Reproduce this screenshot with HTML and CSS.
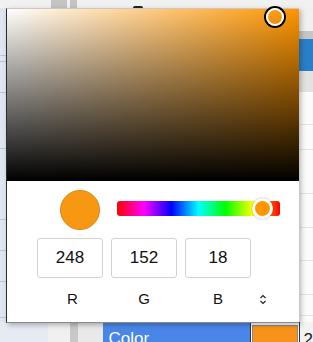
FILE: index.html
```html
<!DOCTYPE html>
<html>
<head>
  <meta charset="utf-8">
  <title>Color picker</title>
  <meta name="viewport" content="width=device-width, initial-scale=1">
  <link rel="stylesheet" href="styles.css">
</head>
<body>
  <div class="app">
    <div class="topbar">
      <span class="tb-block tb-a"></span>
      <span class="tb-block tb-b"></span>
      <span class="tb-knob"></span>
    </div>

    <div class="middle">
      <div class="left-strip">
        <div class="ls-row" style="height:47px"></div>
        <div class="ls-row" style="height:5px"></div>
        <div class="ls-row" style="height:30px"></div>
        <div class="ls-row" style="height:55px"></div>
        <div class="ls-row" style="height:70px"></div>
        <div class="ls-row" style="height:30px"></div>
        <div class="ls-row" style="height:30px"></div>
        <div class="ls-row" style="height:35px"></div>
      </div>
      <div class="center"></div>
      <div class="right-strip">
        <div class="rs-top"></div>
        <div class="rs-gray"></div>
        <div class="rs-blue"></div>
        <div class="rs-light"></div>
        <div class="rs-line" style="height:32px"></div>
        <div class="rs-line" style="height:24px"></div>
        <div class="rs-line" style="height:43px"></div>
        <div class="rs-line" style="height:33px"></div>
        <div class="rs-line" style="height:32px"></div>
        <div class="rs-line" style="height:33px"></div>
        <div class="rs-line" style="height:20px"></div>
      </div>
    </div>

    <div class="bottombar">
      <div class="bb-side"></div>
      <div class="bb-light"></div>
      <div class="bb-gray"></div>
      <div class="bb-cell"></div>
      <div class="bb-color">Color</div>
      <div class="bb-swatch"><span></span></div>
      <div class="bb-num">2</div>
    </div>
  </div>

  <div class="picker">
    <div class="sv-area">
      <span class="sv-handle"></span>
    </div>
    <div class="controls">
      <div class="preview-row">
        <span class="preview"></span>
        <div class="hue">
          <span class="hue-thumb"></span>
        </div>
      </div>
      <div class="fields">
        <div class="field">248</div>
        <div class="field">152</div>
        <div class="field">18</div>
        <span></span>
        <div class="label label-r">R</div>
        <div class="label">G</div>
        <div class="label">B</div>
        <div class="toggle">
          <svg width="8" height="11" viewBox="0 0 8 11">
            <path d="M1.5 4 L4 1.5 L6.5 4" fill="none" stroke="#222" stroke-width="1.2"/>
            <path d="M1.5 7 L4 9.5 L6.5 7" fill="none" stroke="#222" stroke-width="1.2"/>
          </svg>
        </div>
      </div>
    </div>
  </div>
</body>
</html>
```

FILE: styles.css
```css
html {
  font-family: "Liberation Sans", Arial, sans-serif;
}
body {
  margin: 0;
  width: 313px;
  height: 342px;
  overflow: hidden;
  position: relative;
  background: #f2f2f2;
}

/* background app, mostly hidden by the popup */
.app {
  display: flex;
  flex-direction: column;
  height: 342px;
}
.topbar {
  height: 8px;
  display: flex;
  align-items: flex-start;
  background: #f1f1f1;
}
.tb-block {
  height: 8px;
  background: #c4c4c4;
}
.tb-a {
  width: 16px;
  margin-left: 51px;
}
.tb-b {
  width: 7px;
  margin-left: 3px;
}
.tb-knob {
  width: 10px;
  height: 3px;
  margin: 6px 0 0 56px;
  border-radius: 2px 2px 0 0;
  background: #222;
}

.middle {
  height: 314px;
  display: flex;
}
.left-strip {
  width: 6px;
  background: #dfe6ef;
}
.ls-row {
  border-bottom: 1px solid #b9c8dc;
}
.center {
  flex: 1;
}
.right-strip {
  width: 14px;
  background: #fbfbfb;
}
.rs-top {
  height: 23px;
  background: #f0f0f0;
}
.rs-gray {
  height: 8px;
  background: #c6c6c6;
}
.rs-blue {
  height: 32px;
  background: #2a7fc9;
}
.rs-light {
  height: 21px;
  background: #e2e2e2;
}
.rs-line {
  border-bottom: 1px solid #e4e4e4;
}

.bottombar {
  height: 20px;
  display: flex;
}
.bb-side {
  width: 48px;
  background: #e6ebf3;
}
.bb-light {
  width: 22px;
  background: #f0f0f0;
}
.bb-gray {
  width: 8px;
  background: #c8c8c8;
}
.bb-cell {
  width: 26px;
  background: #e9e9e9;
}
.bb-color {
  width: 142px;
  padding: 7px 0 0 5px;
  background: #4a86e8;
  color: #fff;
  font-size: 17px;
  line-height: 20px;
}
.bb-swatch {
  width: 46px;
  border: 1px solid #333;
  border-bottom: 0;
  padding: 2px 1px 0;
  background: #fff;
}
.bb-swatch span {
  display: block;
  height: 100%;
  border: 1px solid #888;
  border-bottom: 0;
  background: #f7931a;
}
.bb-num {
  padding: 8px 0 0 4px;
  font-size: 17px;
  color: #222;
}

/* colour picker popup */
.picker {
  position: absolute;
  left: 6px;
  top: 8px;
  width: 292px;
  height: 313px;
  background: #fff;
  border-top: 1px solid #c8c8c8;
  border-left: 1px solid #2c2c2c;
  border-bottom: 1px solid #8a8a8a;
  box-shadow: 2px 2px 5px rgba(0, 0, 0, 0.28);
  display: flex;
  flex-direction: column;
}
.sv-area {
  position: relative;
  height: 172px;
  background:
    linear-gradient(to top, #000, rgba(0, 0, 0, 0)),
    linear-gradient(to right, #fff, hsl(35, 100%, 50%));
}
.sv-handle {
  position: absolute;
  left: 259px;
  top: -1px;
  width: 18px;
  height: 18px;
  box-sizing: border-box;
  border: 2px solid #fff;
  border-radius: 50%;
  box-shadow: 0 0 0 2px #000;
}

.controls {
  flex: 1;
  padding-top: 9px;
}
.preview-row {
  display: flex;
  align-items: center;
  padding-left: 53px;
  gap: 17px;
}
.preview {
  width: 40px;
  height: 40px;
  border-radius: 50%;
  box-sizing: border-box;
  border: 1px solid #d8860f;
  background: #f89812;
}
.hue {
  position: relative;
  width: 163px;
  height: 15px;
  border-radius: 3px;
  margin-top: -3px;
  background: linear-gradient(to right, #f00, #f0f 16.6%, #00f 33.3%, #0ff 50%, #0f0 66.6%, #ff0 83.3%, #f00);
}
.hue-thumb {
  position: absolute;
  left: 135px;
  top: -3px;
  width: 21px;
  height: 21px;
  box-sizing: border-box;
  border: 3px solid #fff;
  border-radius: 50%;
  background: #ff9500;
  box-shadow: 0 0 2px rgba(0, 0, 0, 0.35);
}

.fields {
  display: grid;
  grid-template-columns: 66px 66px 66px 12px;
  column-gap: 8px;
  padding-left: 30px;
  margin-top: 8px;
}
.field {
  height: 40px;
  box-sizing: border-box;
  border: 1px solid #d2d2d2;
  border-radius: 3px;
  display: flex;
  align-items: center;
  justify-content: center;
  font-size: 17px;
  color: #111;
}
.label {
  margin-top: 11px;
  height: 20px;
  line-height: 20px;
  text-align: center;
  font-size: 15px;
  color: #111;
}
.label-r {
  padding-left: 5px;
}
.toggle {
  margin-top: 11px;
  height: 20px;
  display: flex;
  align-items: center;
}
```
